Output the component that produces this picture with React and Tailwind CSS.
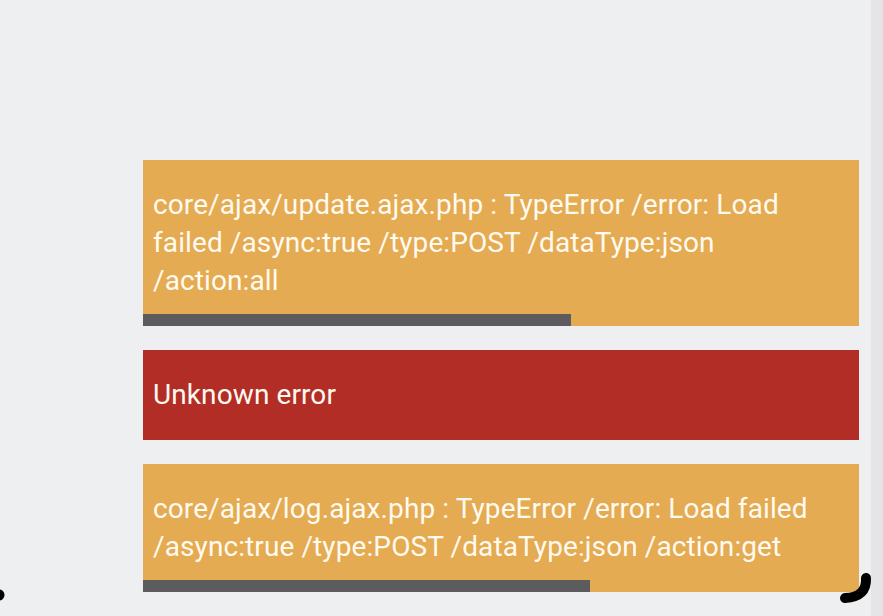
import React from 'react';

const toasts = [
  {
    id: 1,
    kind: 'warning',
    text: 'core/ajax/update.ajax.php : TypeError /error: Load failed /async:true /type:POST /dataType:json /action:all',
    progress: 428,
  },
  { id: 2, kind: 'error', text: 'Unknown error', progress: 0 },
  {
    id: 3,
    kind: 'warning',
    text: 'core/ajax/log.ajax.php : TypeError /error: Load failed /async:true /type:POST /dataType:json /action:get',
    progress: 447,
  },
];

const Toast = ({ kind, text, progress }) => (
  <div className={kind === 'error' ? 'bg-[#b22d26]' : 'bg-[#e4ab52]'}>
    <div className="pl-[10px] pr-[30px] pt-[26px] pb-[14px] text-[28px] leading-[38px] tracking-[0.1px] text-[#fffaf0]">{text}</div>
    <div className="h-[12px]">
      {progress > 0 && <div className="h-full bg-[#5c5c5e]" style={{ width: progress }} />}
    </div>
  </div>
);

export default function App() {
  return (
    <div className="relative flex h-[616px] w-[883px] overflow-hidden bg-[#eeeff1] font-['Roboto',sans-serif]">
      <div className="flex-1">
        <div className="ml-[143px] flex w-[716px] flex-col gap-6 pt-[160px]">
          {toasts.map(t => (
            <Toast key={t.id} {...t} />
          ))}
        </div>
      </div>
      <div className="w-[12px] bg-[#e5e5e8]" />

      {/* rounded screen corners */}
      <svg className="pointer-events-none absolute left-0 top-0" width="883" height="616">
        <circle cx="-1" cy="595" r="5.5" fill="#000" />
        <path d="M866 578 Q867 597 845 598" fill="none" stroke="#000" strokeWidth="10" strokeLinecap="round" />
      </svg>
    </div>
  );
}
